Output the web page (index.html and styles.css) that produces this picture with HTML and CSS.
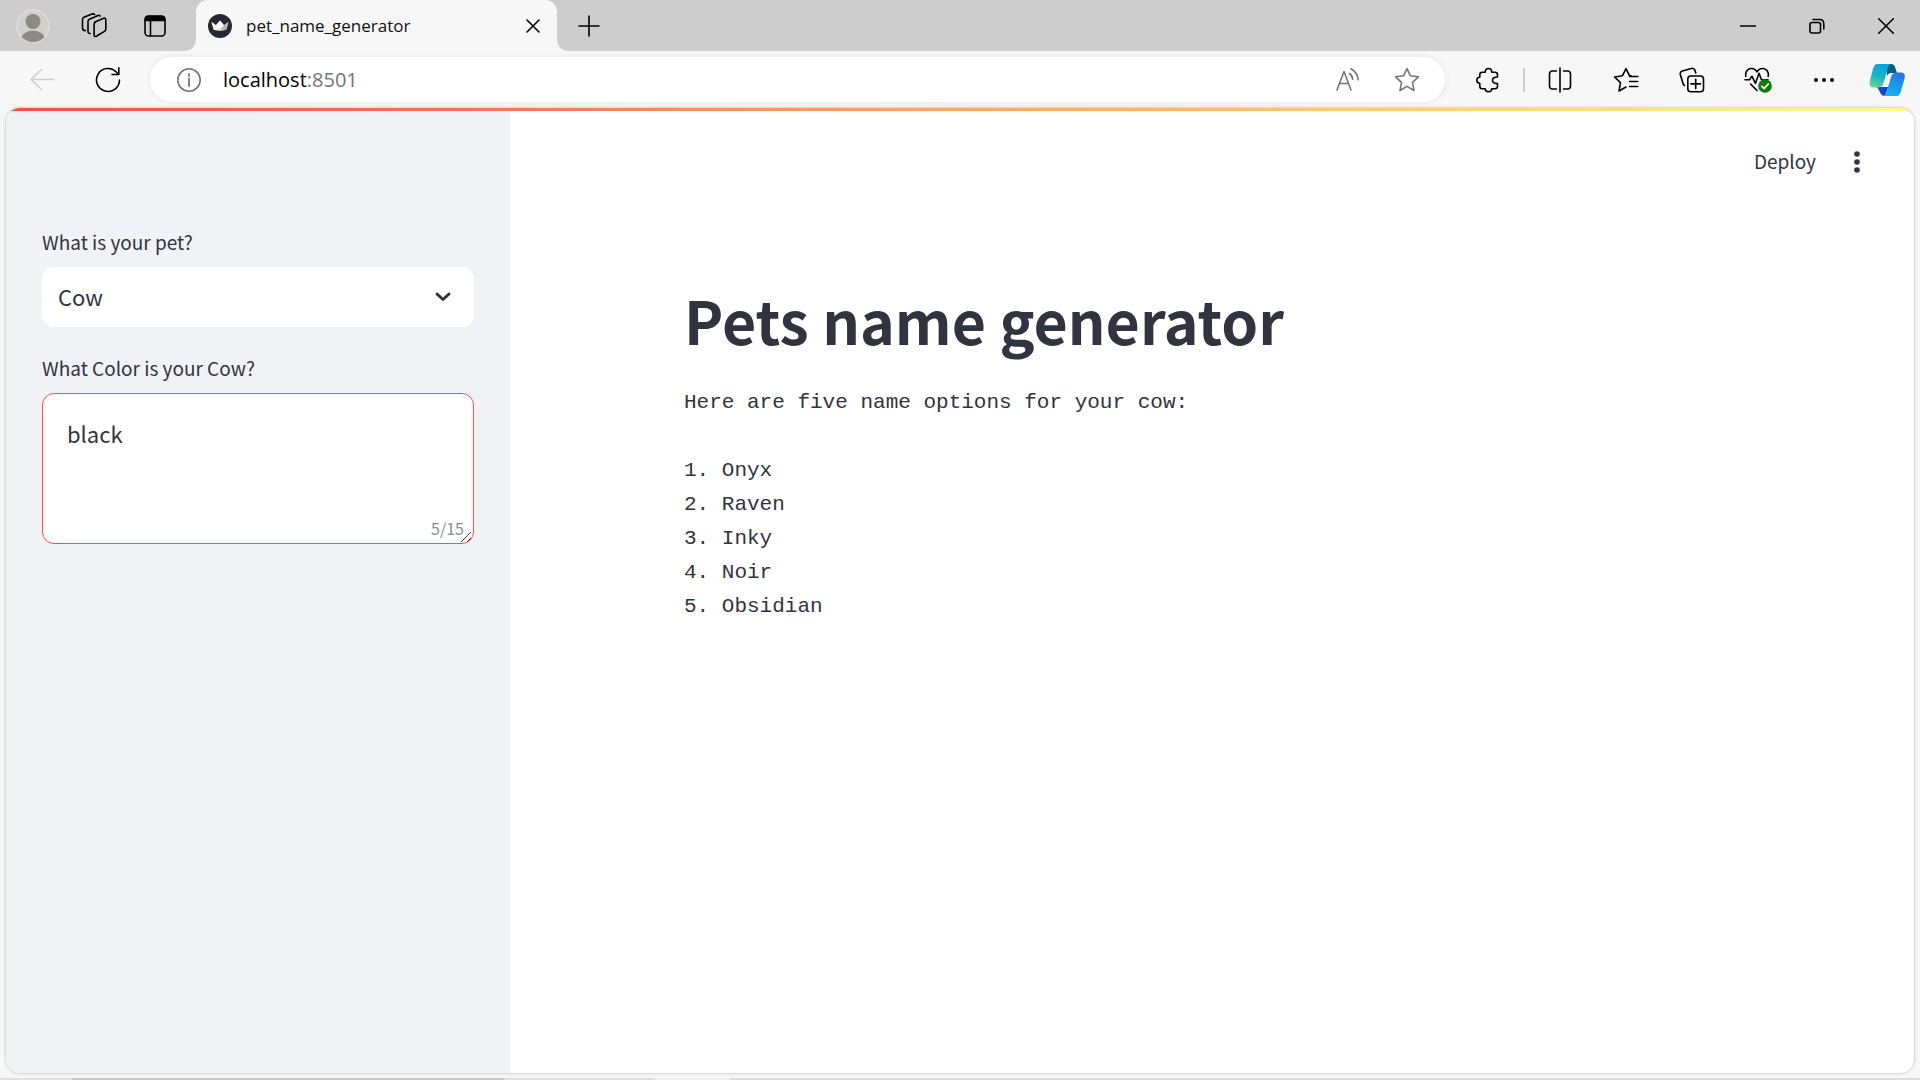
FILE: index.html
```html
<!DOCTYPE html>
<html lang="en">
<head>
<meta charset="utf-8">
<meta name="viewport" content="width=device-width, initial-scale=1">
<title>pet_name_generator</title>
<link rel="stylesheet" href="styles.css">
</head>
<body>
<header class="browser">
  <div class="tabstrip">
    <button class="strip-btn" aria-label="Profile">
      <svg width="34" height="34" viewBox="0 0 34 34"><defs><clipPath id="face"><circle cx="17" cy="17" r="16"/></clipPath></defs><circle cx="17" cy="17" r="16" fill="#d2d0cc" stroke="#e0deda" stroke-width="1.5"/><g clip-path="url(#face)" fill="#8d8985"><circle cx="17" cy="12.5" r="7.5"/><ellipse cx="17" cy="31" rx="12" ry="9.5"/></g></svg>
    </button>
    <button class="strip-btn" aria-label="Workspaces">
      <svg class="line" width="26" height="26" viewBox="0 0 26 26"><path d="M13.5 9.2 22 5.4q2.800-1 2.800 1.500v9.300q0 1.500-1.400 2.200l-7.600 4.600q-2.700 1.400-2.700-1.300V11.500q0-1.600 1.200-2.300Z"/><path d="M9.300 20.500Q7 20.500 7 18.500V8.500q0-1.500 1.400-2.200L17 2.400q1.400-.5 2.200.6"/><path d="M4.300 17.600Q1.500 17.600 1.500 15V6.300Q1.500 5 2.900 4.300L11 .9q1.500-.5 2.500.6"/></svg>
    </button>
    <button class="strip-btn" aria-label="Tab actions menu">
      <svg class="line" width="24" height="24" viewBox="0 0 24 24"><rect x="2" y="2" width="20" height="20" rx="3.500"/><path d="M2.500 6.500V4.500Q2.500 2.500 5 2.500h14q2.500 0 2.500 2v2Z" fill="#000"/><path d="M7.500 7v15"/></svg>
    </button>
    <div class="tab">
      <svg width="24" height="24" viewBox="0 0 24 24"><circle cx="12" cy="12" r="12" fill="#262730"/><path d="m3.500 8 4.500 3.200L12 6.500l4 4.700L20.500 8l-2.300 7.800q-6.200 1.800-12.400 0Z" fill="#e9e9e9"/><path d="m12 6.500 4 4.700-9 4.900q-.7 0-1.200-.3L3.500 8 8 11.200Z" fill="#fff"/><path d="M20.500 8 16 11.200l-3.500 5.400q3 0 5.700-.8Z" fill="#b5b5b8"/></svg>
      <span class="tab-title">pet_name_generator</span>
      <button class="tab-close" aria-label="Close tab"><svg class="line" width="14" height="14" viewBox="0 0 14 14"><path d="m1 1 12 12M13 1 1 13"/></svg></button>
    </div>
    <button class="new-tab" aria-label="New tab"><svg class="line" width="22" height="22" viewBox="0 0 22 22"><path d="M11 1v20M1 11h20"/></svg></button>
    <div class="window-controls">
      <button class="win-btn" aria-label="Minimize"><svg class="line" width="16" height="16" viewBox="0 0 16 16"><path d="M0 8h16"/></svg></button>
      <button class="win-btn" aria-label="Restore"><svg class="line" width="16" height="16" viewBox="0 0 16 16"><rect x="1" y="4.500" width="10.500" height="10.500" rx="2"/><path d="M4 1.500h6.500Q14.800 1.500 14.800 6v5"/></svg></button>
      <button class="win-btn" aria-label="Close"><svg class="line" width="16" height="16" viewBox="0 0 16 16"><path d="m.7.7 14.600 14.600M15.300.7.7 15.300"/></svg></button>
    </div>
  </div>
  <div class="toolbar">
    <button class="tool" aria-label="Back"><svg class="line faint" width="24" height="24" viewBox="0 0 24 24"><path d="M23.500 11.500H1M11.500 1.500 1 11.500l10.500 10"/></svg></button>
    <button class="tool" aria-label="Refresh"><svg class="line" width="26" height="26" viewBox="0 0 26 26"><path d="M24.500 13A11.500 11.500 0 1 1 21 4.700l2.500 2.500M23.800.8v6.700h-6.700"/></svg></button>
    <div class="address">
      <svg class="line grey" width="24" height="24" viewBox="0 0 24 24"><circle cx="12" cy="12" r="11.200"/><path d="M12 10.500V18M12 6v2" stroke-width="1.800"/></svg>
      <a class="url" href="#">localhost<span class="port">:8501</span></a>
      <button class="pill-btn" aria-label="Read aloud"><svg class="line grey" width="24" height="24" viewBox="0 0 24 24"><path d="M2 22 9 3.500 16 22M4.500 15.500h9M14.500 5.500q3 2 3.200 5.800M16 .800q6.500 3.700 7.200 11"/></svg></button>
      <button class="pill-btn" aria-label="Add to favorites"><svg class="line grey" width="26" height="26" viewBox="0 0 26 26"><path d="m13 1.500 3.400 7.300 8 1-5.900 5.500 1.500 8.200-7-4.100-7 4.100 1.500-8.200-5.900-5.500 8-1Z"/></svg></button>
    </div>
    <button class="tool first" aria-label="Extensions"><svg class="line" width="24" height="26" viewBox="0 0 24 26"><path d="M6 5.200h3.200Q9.200 1.500 12.500 1.500T15.800 5.200H19Q21.500 5.200 21.500 7.500V10q-5 0-5 3.300t5 3.300v2.700q0 2.400-2.500 2.400h-3.200q0 3-3.300 3t-3.300-3H6q-2.200 0-2.200-2.400v-3q-3-.2-3-3t3-3V7.500Q3.800 5.200 6 5.200Z"/></svg></button>
    <span class="divider"></span>
    <button class="tool" aria-label="Split screen"><svg class="line" width="24" height="26" viewBox="0 0 24 26"><path d="M12 1v24M8.500 4H4.500Q1.500 4 1.500 7v12q0 3 3 3h4M15.500 4h4q3 0 3 3v12q0 3-3 3h-4"/></svg></button>
    <button class="tool" aria-label="Favorites"><svg class="line" width="26" height="26" viewBox="0 0 26 26"><path d="M18 8.700h-1.500L13 1.700 9.500 8.700 1.500 10l6 5.700L6 24l7-4M16.500 9.500h8.300M16.500 14.500h8.300M16.500 19.500h8.300"/></svg></button>
    <button class="tool" aria-label="Collections"><svg class="line" width="26" height="26" viewBox="0 0 26 26"><rect x="8.800" y="9" width="15.700" height="15.700" rx="3"/><path d="M16.700 12.200v9.400M12 16.900h9.400M5.500 18.500q-1-.4-1.400-1.700L1.300 7.500Q.8 4.800 3.300 4l9-2.600q2.700-.7 3.700 2l.8 2.600"/></svg></button>
    <button class="tool" aria-label="Browser essentials"><svg class="line" width="28" height="28" viewBox="0 0 28 28"><path d="M1.800 10.500Q.8 4 6.500 2.500q4.500-.5 6.500 3.300 2-3.800 6.500-3.300 5.700 1.500 4.700 8M1 13.800h4.500l2.500-3.500 3.500 7 3.500-10 2.500 6.500h6.500M6.500 18l6.500 6.500"/><circle cx="21" cy="20" r="6.800" fill="#0f7b0f" stroke="none"/><path d="m17.800 20.200 2.200 2.400 4.300-4.700" stroke="#fff"/></svg></button>
    <button class="tool" aria-label="Settings and more"><svg width="22" height="6" viewBox="0 0 22 6"><circle cx="3" cy="3" r="2"/><circle cx="11" cy="3" r="2"/><circle cx="19" cy="3" r="2"/></svg></button>
    <button class="tool" aria-label="Copilot">
      <svg width="36" height="34" viewBox="0 0 36 34"><defs><linearGradient id="ca" x1=".5" y1="0" x2=".2" y2="1"><stop offset="0" stop-color="#0aa1dd"/><stop offset=".5" stop-color="#17b5c8"/><stop offset="1" stop-color="#68d987"/></linearGradient><linearGradient id="cb" x1=".8" y1="0" x2=".4" y2="1"><stop offset="0" stop-color="#2873dd"/><stop offset="1" stop-color="#12b4fb"/></linearGradient></defs><path d="M17 1h5q3 0 4 3l2 6h-6q-3 0-4 3Z" fill="#075c82"/><path d="M8 24h11q2 0 1-2l-4 11q-4 0-5-4Z" fill="#1747d2"/><path d="M8.500 1H22q-2 0-3 3.500L14.500 20q-1.200 4.500-5.500 4.500H4.500Q-.5 24.500.8 18L4 6Q5.300 1 8.500 1Z" fill="url(#ca)"/><path d="M27.500 33H13.500q3 0 4-3.500L22 14q1.200-4.500 5.500-4.500H32q5 0 3.400 6.500L32 28q-1.300 5-4.500 5Z" fill="url(#cb)"/></svg>
    </button>
  </div>
</header>
<div class="page">
  <div class="rainbow"></div>
  <aside class="sidebar">
    <div class="field">
      <label for="pet">What is your pet?</label>
      <div class="control">
        <select id="pet"><option>Cow</option></select>
        <svg class="chevron" width="18" height="12" viewBox="0 0 18 12"><path d="m3 3 6 5.500L15 3"/></svg>
      </div>
    </div>
    <div class="field">
      <label for="color">What Color is your Cow?</label>
      <div class="control">
        <textarea id="color" maxlength="15">black</textarea>
        <span class="count">5/15</span>
        <svg class="grip" width="12" height="12" viewBox="0 0 12 12"><path d="M1 11 11 1M7 11l4-4"/></svg>
      </div>
    </div>
  </aside>
  <main class="main">
    <div class="app-bar">
      <button class="deploy">Deploy</button>
      <button class="menu" aria-label="Main menu"><svg width="6" height="22" viewBox="0 0 6 22"><circle cx="3" cy="3" r="2.800"/><circle cx="3" cy="11" r="2.800"/><circle cx="3" cy="19" r="2.800"/></svg></button>
    </div>
    <div class="content">
      <h1>Pets name generator</h1>
<pre class="answer">Here are five name options for your cow:

1. Onyx
2. Raven
3. Inky
4. Noir
5. Obsidian</pre>
    </div>
  </main>
</div>
<div class="edge"></div>
</body>
</html>
```
FILE: styles.css
```css
* { box-sizing: border-box; }

body {
  margin: 0;
  min-height: 100vh;
  display: flex;
  flex-direction: column;
  background: #f7f7f7;
  color: #31333f;
  font-family: "Noto Sans CJK SC", sans-serif;
}

button {
  display: flex;
  align-items: center;
  justify-content: center;
  padding: 0;
  border: 0;
  background: none;
  color: inherit;
  font: inherit;
}

svg { display: block; flex: none; }
.line { fill: none; stroke: #000; stroke-width: 1.6; stroke-linecap: round; stroke-linejoin: round; }
.line.grey { stroke: #757575; }
.line.faint { stroke: #cdcdcd; }

/* Tab strip */
.tabstrip {
  display: flex;
  height: 51px;
  padding-left: 2px;
  background: #cdcdcd;
}
.strip-btn { width: 61px; }
.tab {
  position: relative;
  display: flex;
  align-items: center;
  flex: 0 1 361px;
  margin-left: 11px;
  padding: 0 12px;
  border-radius: 12px 12px 0 0;
  background: #f7f7f7;
}
.tab::before, .tab::after {
  content: "";
  position: absolute;
  bottom: 0;
  width: 10px;
  height: 10px;
}
.tab::before { right: 100%; background: radial-gradient(circle at 0 0, #cdcdcd 9px, #f7f7f7 10px); }
.tab::after { left: 100%; background: radial-gradient(circle at 100% 0, #cdcdcd 9px, #f7f7f7 10px); }
.tab-title { flex: 1; padding-left: 14px; color: #111; font: 17px/24px "Open Sans", sans-serif; }
.tab-close { width: 24px; height: 24px; }
.new-tab { width: 64px; }
.window-controls { display: flex; margin-left: auto; }
.win-btn { width: 69px; }

/* Toolbar */
.toolbar {
  display: flex;
  align-items: center;
  height: 57px;
  padding-left: 9px;
}
.tool { flex: none; width: 66px; height: 44px; }
.tool:last-child { width: 63px; padding-right: 4px; }
.tool.first { margin-left: 10px; }
.divider { width: 2px; height: 24px; margin: 0 2px; background: #cdcdcd; }
.address {
  display: flex;
  align-items: center;
  flex: 1;
  height: 45px;
  margin-left: 9px;
  padding: 0 8px 0 27px;
  border-radius: 23px;
  background: #fff;
  box-shadow: 0 0 6px rgba(0, 0, 0, .08);
}
.url { flex: 1; padding-left: 22px; color: #000; font: 20px/28px "Open Sans", sans-serif; text-decoration: none; }
.port { color: #757575; }
.pill-btn { width: 60px; height: 40px; }

/* Page frame */
.page {
  position: relative;
  flex: 1;
  display: flex;
  margin: 0 6px 5px;
  border-radius: 14px;
  background: #fff;
  box-shadow: 0 0 3px rgba(0, 0, 0, .3);
  overflow: hidden;
}
.rainbow {
  position: absolute;
  top: 0;
  left: 0;
  right: 0;
  height: 3px;
  background: linear-gradient(90deg, #ff4b4b, #fffd80);
}
.sidebar {
  display: flex;
  flex-direction: column;
  flex: none;
  gap: 26px;
  width: 504px;
  padding: 119px 36px 24px;
  background: #f0f2f6;
}
.field { display: flex; flex-direction: column; gap: 10px; }
.field label { font-size: 19px; line-height: 30px; }
.control { position: relative; }
select, textarea {
  display: block;
  width: 100%;
  border-radius: 12px;
  background: #fff;
  color: inherit;
  font-family: inherit;
  font-size: 22px;
  outline: 0;
}
select {
  height: 60px;
  padding: 0 16px 2px;
  border: 0;
  appearance: none;
}
.chevron {
  position: absolute;
  top: 24px;
  right: 22px;
  fill: none;
  stroke: #31333f;
  stroke-width: 3;
  stroke-linecap: round;
  stroke-linejoin: round;
  pointer-events: none;
}
textarea {
  height: 151px;
  padding: 22px 24px;
  border: 1px solid #ff4b4b;
  line-height: 34px;
  resize: both;
}
textarea::-webkit-resizer { background: none; }
.grip {
  position: absolute;
  right: 2px;
  bottom: 1px;
  fill: none;
  stroke: #444;
  pointer-events: none;
}
.count {
  position: absolute;
  right: 10px;
  bottom: 4px;
  color: #8b8c93;
  font-size: 16px;
  line-height: 24px;
}

/* Main column */
.main { flex: 1; min-width: 0; }
.app-bar {
  display: flex;
  justify-content: flex-end;
  align-items: center;
  gap: 38px;
  padding: 36px 54px 0 0;
}
.deploy { height: 36px; padding-bottom: 3px; font-size: 19px; }
.menu svg { fill: #31333f; }
.content { max-width: 1056px; margin: 0 auto; padding-top: 100px; }
h1 { margin: 0; font-size: 59px; font-weight: 700; line-height: 80px; }
.answer {
  margin: 26px 0 0;
  font-family: "Liberation Mono", monospace;
  font-size: 21px;
  line-height: 34px;
}

/* Sliver of the desktop under the window */
.edge { height: 2px; background: linear-gradient(90deg, #e0e0e0 72px, #c8c8c8 72px 504px, #dedede 504px 655px, #f0f0f0 655px 730px, #dcdcdc 730px); }
```
